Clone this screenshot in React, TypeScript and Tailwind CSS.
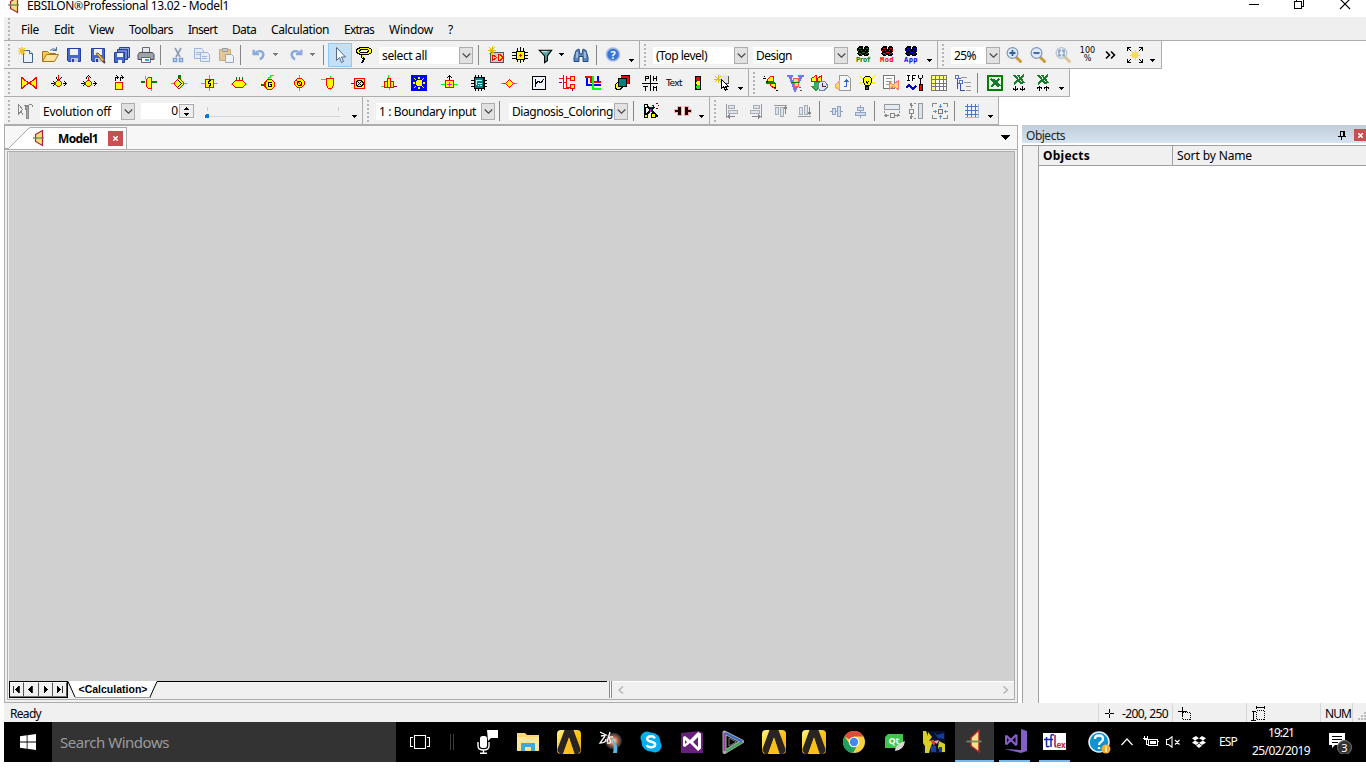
import { useLayoutEffect, useRef, type ReactNode } from "react";

type Shape = [stroke: string, fill: string, d: string, width?: number];

const R = "#f00";
const Y = "#ff0";
const G = "#0f0";
const D = "#008000";
const K = "#000";
const N = "none";

/* Text set to a given width by spreading or tightening its letters. */
function Fit({ w, children, className = "" }: { w: number; children: string; className?: string }) {
  const ref = useRef<HTMLSpanElement>(null);
  useLayoutEffect(() => {
    const el = ref.current;
    if (!el) return;
    el.style.letterSpacing = "0px";
    const natural = el.getBoundingClientRect().width;
    el.style.letterSpacing = `${(w - natural) / children.length}px`;
  }, [w, children]);
  return (
    <span ref={ref} className={`shrink-0 whitespace-pre ${className}`}>
      {children}
    </span>
  );
}

function Ic({ s, smooth = false, className = "size-[18px]", box = 18 }: { s: Shape[]; smooth?: boolean; className?: string; box?: number }) {
  return (
    <svg className={`shrink-0 ${className}`} viewBox={`0 0 ${box} ${box}`} shapeRendering={smooth ? "auto" : "crispEdges"}>
      {s.map(([stroke, fill, d, width], i) => (
        <path key={i} d={d} stroke={stroke} fill={fill} strokeWidth={width ?? 1} />
      ))}
    </svg>
  );
}

function Cell({ children, className = "w-6" }: { children?: ReactNode; className?: string }) {
  return <div className={`flex h-full shrink-0 items-center justify-center ${className}`}>{children}</div>;
}

function Grip() {
  return (
    <div className="flex w-[10px] shrink-0 justify-center">
      <svg className="h-[24px] w-[3px]" viewBox="0 0 3 24" shapeRendering="crispEdges">
        {[1, 5, 9, 13, 17, 21].map((y) => (
          <rect key={y} x="0" y={y} width="2" height="2" fill="#b5b5b5" />
        ))}
      </svg>
    </div>
  );
}

function Sep({ className = "w-[7px]" }: { className?: string }) {
  return (
    <div className={`flex shrink-0 justify-center ${className}`}>
      <div className="h-[20px] w-px bg-[#858585]" />
    </div>
  );
}

function Caret({ className = "w-[15px]", low = false, color = K }: { className?: string; low?: boolean; color?: string }) {
  return (
    <div className={`flex shrink-0 justify-center ${low ? "pt-[11px]" : "pb-px"} ${className}`}>
      <svg className="h-[3px] w-[5px]" viewBox="0 0 5 3" shapeRendering="crispEdges">
        <path d="M0 0h5v1H4v1H3v1H2V2H1V1H0z" fill={color} />
      </svg>
    </div>
  );
}

function Combo({ className, text, w }: { className: string; text: string; w: number }) {
  return (
    <div className={`mt-[5px] flex h-[17px] shrink-0 items-center self-start bg-white ${className}`}>
      <div className="flex min-w-0 flex-1 pt-px pl-[3px]">
        <Fit w={w}>{text}</Fit>
      </div>
      <div className="flex h-[17px] w-[14px] shrink-0 items-center justify-center border border-[#adadad] bg-[#e1e1e1]">
        <svg className="h-[5px] w-[9px]" viewBox="0 0 9 5">
          <path d="M.7.5 4.5 4.2 8.3.5" fill="none" stroke="#444" strokeWidth="1.1" />
        </svg>
      </div>
    </div>
  );
}

function Bar({ className, children }: { className: string; children: ReactNode }) {
  return <div className={`flex h-full shrink-0 items-center border-r border-b border-[#adadad] bg-[#f1f1f1] pt-px ${className}`}>{children}</div>;
}

const ebsilon: Shape[] = [
  ["#b0203a", "#f7e07a", "M5.5 5.5 12.5 1.5V16.5L5.5 12.5z", 1.2],
  ["#5d8a55", N, "M3 9h11", 1.3],
];

const save: Shape[] = [
  ["#243f9c", "#4668cd", "M2.5 2.5h13v13h-12l-1-1z"],
  [N, "#eef2fb", "M5 3h8v6H5z"],
  [N, "#c5c9d4", "M6 12h7v4H6z"],
  [N, "#243f9c", "M7 13h2v3H7z"],
];

const files: Shape[][] = [
  [
    ["#47637f", "#e9f2fb", "M6.5 4.5h6l3 3v9h-9z"],
    ["#47637f", "#fff", "M12.5 4.5v3h3"],
    ["#f2c21c", N, "M5 1v8M1 5h8M2 2l6 6M8 2 2 8", 1.2],
  ],
  [
    ["#a6751a", "#f5c75c", "M1.5 15.5V5.5h5l2 2h6v2"],
    ["#a6751a", "#ffe39b", "M1.5 15.5l4-7h12l-4 7z"],
    ["#4e6f97", N, "M9 4.500q3-3 6-1M15.500 1v3.500h-4"],
  ],
  save,
  [...save, ["#8a5a20", "#f5c148", "M7 7.5 9 7l6.5 7-1.5 2z"], ["#444", N, "M14 15l2 2", 2]],
  [
    ["#243f9c", "#8fa3df", "M6.5 1.5h10v10h-10z"],
    ["#243f9c", "#6e86d2", "M4.5 3.5h10v10h-10z"],
    ["#243f9c", "#4668cd", "M1.5 6.5h10v10h-10z"],
    [N, "#eef2fb", "M4 7h6v4H4zM5 14h4v3H5z"],
  ],
  [
    ["#667", "#e7e9ee", "M5.5 1.5h7v5h-7z"],
    ["#4b4f58", "#9fa3ab", "M2.5 6.5h13l1.500 2v5h-16v-5z"],
    ["#667", "#fff", "M4.5 11.5h9v5h-9z"],
    [N, "#3aa0e0", "M8 13h4v2H8z"],
  ],
];

const clip: Shape[][] = [
  [
    ["#8d9cb5", N, "M6 2l5 9M12 2 7 11", 1.6],
    ["#7da0d5", N, "M4.5 12.5h3v3h-3zM10.5 12.5h3v3h-3z", 1.6],
  ],
  [
    ["#9fb4d6", "#e4ecf8", "M1.5 2.5h7l2 2v8h-9z"],
    ["#9fb4d6", "#e4ecf8", "M7.5 6.5h7l2 2v7h-9z"],
    ["#9fb4d6", N, "M3 6.5h4M3 8.5h4M9 10.5h5M9 12.5h5"],
  ],
  [
    ["#c8ab77", "#e4c795", "M2.5 3.5h11v11h-11z"],
    ["#999", "#ccc", "M5.5 2.5h5v3h-5z"],
    ["#9aa5b8", "#eff3f8", "M8.5 8.5h6l2 2v6h-8z"],
  ],
];

/* Component palette */
const parts: Shape[][] = [
  [[R, Y, "M1.500 3.500v11L8 9.500v-1zM16.500 3.500v11L10 9.500v-1z", 1.3], [R, N, "M8 8.500h2M8 9.500h2"]],
  [
    [K, N, "M1 9.500h3M13 9.500h4M3 7l2 2.500-2 2.500M14 7l2.500 2.500L14 12M6 3.500l2.500 3 3-3"],
    [R, N, "M8.500 1v5M4 9.500h2"],
    [R, Y, "M7.500 6.500h2l2 2v2l-2 2h-2l-2-2v-2z", 1.3],
  ],
  [
    [K, N, "M1 9.500h3M13 9.500h4M3 7l2 2.500-2 2.500M14 7l2.500 2.500L14 12M6 4.500l2.500-3 3 3"],
    [R, N, "M8.500 3v4M4 9.500h2"],
    [R, Y, "M7.500 6.500h2l2 2v2l-2 2h-2l-2-2v-2z", 1.3],
  ],
  [
    [R, Y, "M5.500 8.500h7v7h-7z"],
    [K, N, "M5 3.500h3M10 3.500h3M6.500 1.500l2 2-2 2M11.500 1.500l2 2-2 2M5.500 4v3M10.500 4v3"],
  ],
  [
    [D, N, "M1 8h4M12 8h5", 2],
    [G, N, "M5.500 2v3M11.500 14v3"],
    [R, Y, "M6.500 5.500 8.500 3.500h3v11h-3l-2-2z", 1.3],
  ],
  [
    [G, N, "M1 9.500h16"],
    [D, N, "M9.500 1v4", 3],
    [R, Y, "M8.500 4.500h1l4 4v2l-4 4h-1l-4-4v-2z", 1.4],
    [K, N, "M8 6l3.500 3.500L8 13", 1.3],
  ],
  [
    [G, N, "M1 9.500h16M9.500 1v16"],
    [R, Y, "M5.500 5.500h8v8h-8z"],
    [K, N, "M10.500 6.500h-1v1h-1v2h2v2h-1v1h-1"],
  ],
  [
    [G, N, "M1 10.500h16"],
    [D, N, "M6.500 3v3M9.500 3v3M12.500 3v3"],
    [R, Y, "M5.500 6.500h7l3 3v1l-3 3h-7l-3-3v-1z", 1.3],
  ],
  [
    [D, N, "M1 11h4", 2],
    [G, N, "M8.500 5V3.500h2V1.500H14"],
    [R, Y, "M7.500 5.500h4l3 3v4l-3 3h-4l-2.500-3v-4z", 1.3],
    [K, N, "M12 8.500H8.500v4h3v-2h-2"],
  ],
  [
    [G, N, "M9.500 1v3M9.500 14v3"],
    [R, Y, "M7.500 4.500h4l3 3v3l-3 3h-4l-3-3v-3z", 1.4],
    [K, N, "M7.500 7.500h3l1 1v3h-3l-1-1z"],
    [R, N, "M6 6l7 7", 1.4],
  ],
  [
    [G, N, "M1 5.500h5M10.500 2v3M10.500 14v2"],
    [R, Y, "M6.500 4.500h7v7l-2 3h-3l-2-3z"],
  ],
  [
    ["#800080", N, "M1 9.500h3"],
    [Y, N, "M1 13.500h3"],
    [R, Y, "M4.500 4.500h10v10h-10z"],
    [K, N, "M8 6.500h3l2 2v2l-2 2H8l-2-2v-2zM7.500 7.500l4 4M11.500 7.500l-4 4"],
  ],
  [
    [G, N, "M8.500 1v3M1 12.500h4M9.500 14v2"],
    ["#800080", N, "M13 12.500h4"],
    [R, Y, "M4.500 7.500h3v6h-3zM10.500 7.500h3v6h-3zM7.500 4.500h3v9h-3z"],
  ],
  [
    [N, "#00f", "M1 1h16v16H1z"],
    [Y, N, "M9 3v2M9 13v2M3 9h2M13 9h2M4 4l2 2M12 12l2 2M14 4l-2 2M6 12l-2 2", 1.4],
    [N, Y, "M7 6h4l1 1v4l-1 1H7l-1-1V7z"],
  ],
  [
    [G, N, "M1 10.500h16"],
    [K, N, "M9.500 1v5M7 4l2.500-2.500L12 4"],
    [R, Y, "M5.500 6.500h8v7h-8z"],
    ["#f0f", N, "M9.500 8v5M7 10.500h5"],
  ],
  [
    [K, N, "M5.500 1v16M8.500 1v16M11.500 1v16M1 6.500h16M1 9.500h16M1 12.500h16M14.500 3v13"],
    [K, "#008080", "M4.500 3.500h9v11h-9z"],
    [N, "#bff", "M6 6h6v1H6zM6 6h1v5H6zM8 9h4v1H8zM8 11h1v1H8zM10 11h2v1h-2z"],
  ],
  [
    [G, N, "M1 9.500h3M14 9.500h3"],
    [R, N, "M3 9.500h2M13 9.500h2"],
    [R, Y, "M9.500 5.500 13.500 9.500 9.500 13.500 5.500 9.500z", 1.4],
  ],
];

const partsB: Shape[][] = [
  [
    [K, "#f0f4ff", "M2.500 2.500h13v13h-13z"],
    [K, N, "M5.500 5v7.500M5.500 10.500l2.500-3.500 3 2 3-4"],
  ],
  [
    [R, N, "M1 4.500h4v4h3M5.500 1v4M5.500 8v6h5M8.500 2v12M9 4.500h3M9 13.500h3"],
    [R, Y, "M12.500 2.500h4v4h-4zM12.500 10.500h4v4h-4z"],
    ["#800080", N, "M1 8.500h3M14.500 15v2"],
  ],
  [
    ["#f00", N, "M1 3h6v5h10", 2],
    ["#00f", N, "M3 4v7h14M14 2v6", 2],
    [G, N, "M9 2v13h8", 2],
  ],
  [
    [N, R, "M8 1h9v9H8z"],
    [K, N, "M8 1.500h8.500V10"],
    [K, Y, "M5 8.500h4l2 3-4 4H4l-2-2v-3z"],
    [K, "#008080", "M5.500 4.500h8v8h-8z"],
  ],
  [[K, N, "M1 9.500h16M9.500 1v16M4.500 2v5M4.500 2.500h3v2h-3M12.500 2v5M15.500 2v5M12.500 4.500h3M2 12.500h5M4.500 12.500V17M12.500 17v-5M15.500 17v-5M13 13.500h2"]],
];

const views: Shape[][] = [
  [
    [R, Y, "M5.500 5.500l3-3h3v5h-6zM7.500 9.500h6v5l-4-2z"],
    ["#008000", N, "M4 8.500h9", 2],
    [K, N, "M1 4.500h3M4 7.500h2M12 13.500h2M14 16.500h2M2 2.500h1"],
  ],
  [
    ["#7474ee", N, "M1 2h6M12 2h6M4 3l5 13 6-13", 2.5],
    ["#f55", "#fbd96a", "M7.500 4.500h5v8h-4z"],
    [D, N, "M5 8.500h8"],
    ["#555", N, "M13 13.500h2M14 16.500h2"],
  ],
  [
    [R, Y, "M1.500 4.500 6 1.500v6H1.500zM7.500 4.500l4-3v6h-4z"],
    ["#2d9a45", "#44b35b", "M4 8.500h4v4h2l-4 4-4-4h2z"],
    ["#6581ac", "#dce8f8", "M10.500 7.500h4l2.500 3v3l-3 3h-4l-2-2.500v-4z"],
    ["#333", N, "M12.500 9v3.500h3"],
  ],
  [
    ["#999", "#f5f6f8", "M5.500 1.500h8l3 3v12h-11z"],
    ["#3465d8", N, "M10 12.500h2.500V6M10.500 8l2-2 2 2"],
    ["#f97", "#ffd56b", "M1.500 10.500 5 7.500v8l-3.500-2z"],
  ],
  [
    [Y, N, "M1 2l4 3M17 2l-4 3M1 9h3M14 9h3", 1.4],
    [K, Y, "M7.500 2.500h4l2 2v4l-2 3h-4l-2-3v-4z"],
    [K, "#555", "M7.500 12.500h3v3h-3z"],
    [K, N, "M8 7l1.500 2L11 7"],
  ],
  [
    ["#777", "#fff", "M1.500 1.500h11v13h-11z"],
    ["#999", N, "M4 4.500h6M4 7.500h6M4 10.500h3"],
    ["#f76", "#ffd56b", "M7.500 8.500l3.500 2 5.500-4v9l-5.500-3-3.500 3z"],
  ],
  [
    [N, "#fff", "M0 0h11v8H0z"],
    [K, N, "M2.500 1v5M1 1.500h3M1 6.500h3M6.500 1v6M6 1.500h4M6 4.500h3M12.500 1v3M16.500 1v3M13 4.500h3M14.500 5v5"],
    ["#0000c8", N, "M0 14l3-3 4 4 3-3", 2.2],
    [K, R, "M13.500 10.500h3v6h-3z"],
  ],
  [
    [N, "#fff", "M1 2h16v14H1z"],
    [N, "#ff7", "M1 2h16v3H1zM1 5h4v11H1z"],
    ["#777", N, "M1.500 1.500h15v15h-15zM1 5.500h16M1 9.500h16M1 12.500h16M5.500 1v16M9.500 1v16M13.500 1v16"],
  ],
  [
    ["#3c50ad", N, "M3.500 3v12M3 4.500h4M3 9.500h4M6.500 10v6h4"],
    ["#5674cf", "#fff", "M1.500 1.500h3v3h-3zM5.500 6.500h3v3h-3z"],
    ["#999", N, "M7 3.500h6M10 8.500h7M12 12.500h5M12 16.500h5"],
  ],
];

const excel: Shape[] = [[D, "#eaf5ea", "M2 2h14v14h-14z", 2], ["#187b2c", N, "M5 5l8 8M8 5l6 7M13 5l-8 8", 1.6]];
const arrows = (up: boolean): Shape[] => [
  ["#187b2c", N, "M4 1l8 9M8 1l6 8M14 1 4 10", 2],
  [K, N, up ? "M5.500 17v-5M3 14.500l2.500-2 2.500 2M12.500 17v-5M10 14.500l2.500-2 2.500 2" : "M5.500 12v5M3 14.500l2.500 2 2.500-2M12.500 12v5M10 14.500l2.500 2 2.500-2"],
];

const gray = "#a8adb5";
const pale = "#dbe4ef";
const align: Shape[][] = [
  [["#999", N, "M3.500 2v14"], [gray, pale, "M5.500 3.500h6v3h-6zM5.500 8.500h9v3h-9z"], ["#888", N, "M5 14.500h7M7 12.500l-2 2 2 2"]],
  [["#999", N, "M14.500 2v14"], [gray, pale, "M6.500 3.500h6v3h-6zM3.500 8.500h9v3h-9z"], ["#888", N, "M5 14.500h7M11 12.500l2 2-2 2"]],
  [["#999", N, "M3 3.500h13"], [gray, pale, "M4.500 5.500h3v7h-3zM9.500 5.500h3v9h-3z"], ["#888", N, "M14.500 5v7M13 6.500l1.500-1.500 1.500 1.500"]],
  [["#999", N, "M3 14.500h13"], [gray, pale, "M4.500 5.500h3v7h-3zM9.500 3.500h3v9h-3z"], ["#888", N, "M14.500 5v7M13 10.500l1.500 1.500 1.500-1.500"]],
];
const center: Shape[][] = [
  [["#8c9cb5", N, "M3 9.500h13"], ["#91a3bf", "#cbdcf2", "M5.500 6.500h3v6h-3zM10.500 4.500h3v10h-3z"]],
  [["#8c9cb5", N, "M9.500 3v13"], ["#91a3bf", "#cbdcf2", "M6.500 5.500h6v3h-6zM4.500 10.500h10v3h-10z"]],
];
const space: Shape[][] = [
  [["#999", "#e3ebf5", "M1.500 2.500h15v5h-15z"], ["#888", N, "M1.500 9v2M16.500 9v2M2 13.500h4M12 13.500h4M4 12l-2 1.500L4 15M14 12l2 1.500-2 1.500M7.500 11.500h4v4h-4z"]],
  [["#999", "#d4e3f7", "M11.500 1.500h4v15h-4z"], ["#888", N, "M3 1.500h2M7 1.500h2M3 16.500h2M7 16.500h2M4.500 2v4M4.500 12v4M2.500 7.500h4v4h-4zM3 4l1.500-2L6 4M3 14l1.500 2L6 14"]],
  [["#888", N, "M1.500 5v-3.500h4M12 1.500h4.500V5M1.500 13v3.500h4M12 16.500h4.500V13"], ["#777", "#eee", "M7.500 7.500h4v4h-4z"], ["#5b8fd6", N, "M9.500 2v4M9.500 13v4M2 9.500h4M13 9.500h4M8 4.500h3M8 14.500h3M4.500 8v3M14.500 8v3"]],
];

function Magnifier({ sign, faded = false }: { sign: string; faded?: boolean }) {
  return (
    <svg className={`size-[18px] shrink-0 ${faded ? "opacity-50" : ""}`} viewBox="0 0 18 18">
      <path d="m11 11 4.500 4.500" stroke="#c99a36" strokeWidth="3" strokeLinecap="round" />
      <circle cx="7.500" cy="7" r="5.400" fill="#dbeafb" stroke="#8095ae" strokeWidth="1.200" />
      <path d={sign} stroke="#365f94" strokeWidth="1.800" fill="none" />
    </svg>
  );
}

function Rosette({ color, label }: { color: string; label: string }) {
  return (
    <div className="flex h-[20px] w-[20px] flex-col items-center pt-px">
      <svg className="h-[11px] w-[13px] shrink-0" viewBox="0 0 13 11" shapeRendering="crispEdges">
        <path d="M3 0h2l1 1h1l1-1h2l2 2v3l-1 1 1 2-2 2H8L6 9 4 10H2L0 8l1-2-1-2V2z" fill="#000" />
        <path d="M2 2h2v1H2zM9 2h2v1H9zM4 4h1v1H4zM8 4h1v1H8zM5 6h3v1H5zM2 7h2v1H2zM9 7h2v1H9zM1 4h1v1H1zM11 4h1v1h-1zM4 8h1v1H4zM8 8h1v1H8z" fill={color} />
        <path d="M6 0h1v3H6z" fill="#eee" />
      </svg>
      <span className="flex" style={{ color }}>
        <Fit w={14} className="font-['DejaVu_Sans_Mono',monospace] text-[7px] leading-[7px] font-bold">{label}</Fit>
      </span>
    </div>
  );
}

function Ansys() {
  return (
    <svg className="size-6" viewBox="0 0 24 24">
      <defs>
        <linearGradient id="gold" x1="0" y1="0" x2="1" y2="1">
          <stop offset="0" stopColor="#fff58a" />
          <stop offset=".5" stopColor="#fcc61a" />
          <stop offset="1" stopColor="#f2a900" />
        </linearGradient>
      </defs>
      <rect width="24" height="24" rx="4" fill="url(#gold)" />
      <path d="M7.500 0h9L23.500 19v2l-2.500 3h-3.500L12 7.500 6 24H3L.5 21v-2z" fill="#2b2522" />
      <path d="M12 7.500 17.500 24H6z" fill="#fcc01b" />
    </svg>
  );
}

function Task({ children, className = "w-[41px]" }: { children: ReactNode; className?: string }) {
  return <div className={`flex h-full shrink-0 items-center justify-center ${className}`}>{children}</div>;
}

function TitleBar() {
  return (
    <div className="flex h-[17px] shrink-0 items-start bg-white">
      <Ic s={ebsilon} smooth className="-mt-[4px] ml-px size-[18px]" />
      <div className="-mt-px ml-[4px] flex leading-[14px]">
        <Fit w={47}>EBSILON</Fit>
        <span className="w-[9px] text-[11px]">®</span>
        <Fit w={146}>Professional 13.02 - Model1</Fit>
      </div>
      <div className="ml-auto flex gap-[35px] pr-[15px]">
        <svg className="h-[12px] w-[10px]" viewBox="0 0 10 12" shapeRendering="crispEdges"><path d="M0 4.500h10" stroke="#000" /></svg>
        <svg className="h-[12px] w-[10px]" viewBox="0 0 10 12" shapeRendering="crispEdges"><path d="M.5 1.500h7v7h-7zM2.500 1V-.5h7v7H8" stroke="#000" fill="none" /></svg>
        <svg className="h-[12px] w-[12px]" viewBox="0 0 12 12"><path d="m1-1 10 10M11-1 1 9" stroke="#000" strokeWidth="1.100" /></svg>
      </div>
    </div>
  );
}

const menus: [string, number][] = [["File", 18], ["Edit", 20], ["View", 25], ["Toolbars", 44], ["Insert", 29], ["Data", 24], ["Calculation", 58], ["Extras", 30], ["Window", 44], ["?", 5]];

function MenuBar() {
  return (
    <div className="flex h-[24px] shrink-0 items-center border-b border-[#adadad] bg-[#efefef]">
      <Grip />
      <div className="ml-[7px] flex gap-[15px] pt-[2px]">
        {menus.map(([label, w]) => (
          <Fit key={label} w={w}>{label}</Fit>
        ))}
      </div>
    </div>
  );
}

function RowOne() {
  return (
    <div className="flex h-[28px] shrink-0">
      <Bar className="w-[636px]">
        <Grip />
        {files.map((s, i) => <Cell key={i}><Ic s={s} smooth /></Cell>)}
        <Sep className="ml-[-1px] w-[7px]" />
        <Cell className="ml-[2px] w-[24px]"><Ic s={clip[0]} smooth /></Cell>
        {clip.slice(1).map((s, i) => <Cell key={i}><Ic s={s} smooth /></Cell>)}
        <Sep className="ml-[-1px] w-[7px]" />
        <Cell className="ml-[3px] w-6"><Ic s={[["#8aa9dc", N, "M3 3v5h6M4 8c3-5 9-4 10 0 0 3-2 5-4 6", 2.6]]} smooth className="size-4" /></Cell>
        <Caret className="w-[9px]" color="#777" />
        <Cell className="ml-[4px] w-6"><Ic s={[["#8aa9dc", N, "M15 3v5H9M14 8C11 3 5 4 4 8c0 3 2 5 4 6", 2.6]]} smooth className="size-4" /></Cell>
        <Caret className="w-[9px]" color="#777" />
        <Sep className="ml-[2px] w-[9px]" />
        <div className="flex h-[24px] w-[24px] shrink-0 items-center justify-center border border-[#90c8f6] bg-[#c4e0f5]">
          <Ic s={[["#536987", "#f6f9fd", "M5.500 1.500v13l3-3 2 5 2-1-2-4.500h4z"]]} smooth />
        </div>
        <Cell><Ic s={[[K, Y, "M5.500 1.500h8l3 2v3l-3 2h-8l-4-2v-3z"], [K, "#f1f1f1", "M5.500 3.500h7l1 1-1 2h-7l-1-1z"], [K, N, "M7 8v3l2 2-2 4", 2], [Y, N, "M7.500 9v3"]]} /></Cell>
        <Combo className="ml-[3px] w-[94px]" text="select all" w={45} />
        <Sep className="ml-[2px] w-[7px]" />
        <Cell className="ml-[2px] w-[24px]"><Ic s={[["#555", "#ccc", "M3.500 6.500h13v10h-13z"], [R, Y, "M5.500 8.500 9.500 11.500l-4 3zM11 8.500h2l2 2v2l-2 2h-2z"], ["#d5c400", N, "M5 0v9M1 4.500h8M2 1l6 7M8 1 2 8"]]} /></Cell>
        <Cell className="w-[24px]"><Ic s={[[K, N, "M6.500 2v14M9.500 1v16M12.500 2v14M1 6.500h16M1 9.500h16M1 12.500h16"], [K, Y, "M5.500 5.500h8v8h-8z"], [R, N, "M9.500 8v3M8 9.500h3"]]} /></Cell>
        <Cell className="w-[26px]"><Ic s={[[K, "#58a6a0", "M2.500 3.500h13L11 9.500v5l-3 2v-7z", 1.2], ["#def", N, "M5 5h6"]]} smooth className="size-[17px]" /></Cell>
        <Caret className="w-[7px]" />
        <Cell className="ml-[4px] w-6"><Ic s={[["#24497c", "#5c87bf", "M4 4.500 7 3l1 5h2l1-5 3 1.500 2 7v4h-5v-5H7v5H2v-4z"], ["#dceafa", N, "M5 6v6M13 6v6"]]} smooth /></Cell>
        <Sep className="w-[7px]" />
        <Cell className="ml-px w-[24px]"><svg className="size-4" viewBox="0 0 16 16"><circle cx="8" cy="7.500" r="6.500" fill="#3974d7" stroke="#a5bbdf" strokeWidth="1.500" /><text x="8" y="11.500" fontSize="11" fontWeight="bold" textAnchor="middle" fill="#fff">?</text></svg></Cell>
        <Caret className="w-[13px]" low />
      </Bar>
      <Bar className="w-[298px]">
        <Grip />
        <Combo className="ml-[3px] w-[95px]" text="(Top level)" w={51} />
        <Combo className="ml-[5px] w-[95px]" text="Design" w={36} />
        <Cell className="ml-[3px] w-6"><Rosette color="#008000" label="Prof" /></Cell>
        <Cell><Rosette color="#f00" label="Mod" /></Cell>
        <Cell><Rosette color="#00f" label="App" /></Cell>
        <Caret low className="w-[13px]" />
      </Bar>
      <Bar className="w-[224px]">
        <Grip />
        <Combo className="ml-[3px] w-[49px]" text="25%" w={22} />
        <Cell className="ml-[2px] w-6"><Magnifier sign="M4.500 7h6M7.500 4v6" /></Cell>
        <Cell><Magnifier sign="M4.500 7h6" /></Cell>
        <Cell className="w-[26px]"><Magnifier faded sign="M5 7V4.500h2M8 4.500h2V7M5 7.500v2h2M8 9.500h2v-2" /></Cell>
        <Cell className="w-[23px]"><div className="flex flex-col items-center pb-px font-['DejaVu_Sans',sans-serif] text-[8px] leading-[8px]"><span>100</span><span>%</span></div></Cell>
        <Cell><Ic s={[[K, N, "m4 5.500 3.500 3.500-3.500 3.500M9 5.500l3.500 3.500L9 12.500", 1.6]]} smooth /></Cell>
        <Cell><Ic s={[[K, N, "M1.500 5V1.500H5M13 1.500h3.500V5M1.500 13v3.500H5M13 16.500h3.500V13M2 2l3 3M16 2l-3 3M2 16l3-3M16 16l-3-3"], ["#f3d55e", N, "M9 4v10M4 9h10M5.500 5.500l7 7M12.500 5.500l-7 7"], [N, "#fad95b", "M6 6h6v6H6z"]]} /></Cell>
        <Caret low className="w-[11px]" />
      </Bar>
    </div>
  );
}

function RowTwo() {
  return (
    <div className="flex h-[28px] shrink-0">
      <Bar className="w-[745px]">
        <Grip />
        {parts.map((s, i) => <Cell key={i} className="w-[30px]"><Ic s={s} /></Cell>)}
        <Cell className="w-[30px]"><Ic s={partsB[0]} /></Cell>
        <Cell className="w-[26px]"><Ic s={partsB[1]} /></Cell>
        <Cell className="w-[26px]"><Ic s={partsB[2]} /></Cell>
        <Cell className="w-[32px]"><Ic s={partsB[3]} /></Cell>
        <Cell className="w-[24px]"><Ic s={partsB[4]} /></Cell>
        <Cell className="w-[24px]"><Fit w={16} className="font-['DejaVu_Sans',sans-serif] text-[9px]">Text</Fit></Cell>
        <Cell><Ic s={[[K, "#333", "M6.500 2.500h5v13h-5z"], [N, R, "M8 3h2l1 1v2l-1 1H8L7 6V4z"], [N, Y, "M8 7h2l1 1v2l-1 1H8l-1-1V8z"], [N, G, "M8 11h2l1 1v2l-1 1H8l-1-1v-2z"]]} /></Cell>
        <Cell><Ic s={[["#555", N, "M10 9.500h5.500v-8"], [N, "#e4e4e4", "M7 1h8v8H7z"], ["#d5c400", N, "M5.500 1v8M1 5.500h8M2 2l6 6M8 2 2 8"], [K, "#fff", "M8.500 5.500v9l2-2 2 4 1.500-1-1.500-3h3z"]]} /></Cell>
        <Caret low className="w-[13px]" />
      </Bar>
      <Bar className="w-[321px]">
        <Grip />
        {views.map((s, i) => <Cell key={i}><Ic s={s} /></Cell>)}
        <Sep className="mr-[3px] w-[5px]" />
        <Cell><Ic s={excel} /></Cell>
        <Cell><Ic s={arrows(false)} /></Cell>
        <Cell><Ic s={arrows(true)} /></Cell>
        <Caret low className="w-[13px]" />
      </Bar>
    </div>
  );
}

function RowThree() {
  return (
    <div className="flex h-[28px] shrink-0">
      <Bar className="w-[359px]">
        <Grip />
        <Cell className="w-[22px]"><Ic s={[["#888", N, "M2.500 2v10l3-3 1 4M3 3l4 5M8 3.500h5M9.500 3v5M13 2.500h3M16.500 3v2"], ["#888", "#aaa", "M9.500 4.500h3v12h-2v-9z"]]} /></Cell>
        <Combo className="ml-[4px] w-[95px]" text="Evolution off" w={68} />
        <div className="ml-[6px] flex h-[16px] w-[53px] shrink-0 items-center justify-end bg-white">
          <span className="pr-px">0</span>
          <div className="flex h-[14px] w-[15px] flex-col items-center justify-center gap-[3px] border border-[#aaa] bg-[#eee]">
            <svg className="h-[3px] w-[5px]" viewBox="0 0 5 3" shapeRendering="crispEdges"><path d="M2 0h1v1h1v1h1v1H0V2h1V1h1z" /></svg>
            <svg className="h-[3px] w-[5px]" viewBox="0 0 5 3" shapeRendering="crispEdges"><path d="M0 0h5v1H4v1H3v1H2V2H1V1H0z" /></svg>
          </div>
        </div>
        <svg className="ml-[8px] h-[18px] w-[138px] shrink-0" viewBox="0 0 138 18" shapeRendering="crispEdges">
          <path d="M5.500 5v4M136.500 5v4" stroke="#ccc" />
          <path d="M5 14.500h133" stroke="#d5d5d5" />
          <path d="M4 12h2l1 1v3H3v-3z" fill="#0078d7" />
        </svg>
        <Caret low className="ml-[7px] w-[15px]" />
      </Bar>
      <Bar className="w-[347px]">
        <Grip />
        <Combo className="ml-[3px] w-[119px]" text="1 : Boundary input" w={97} />
        <Sep className="ml-[2px] w-[5px]" />
        <Combo className="ml-[7px] w-[119px]" text="Diagnosis_Coloring" w={101} />
        <Sep className="ml-[3px] w-[5px]" />
        <Cell className="ml-[3px] w-[24px]"><Ic s={[[K, N, "M3 5v8M5 4l11 11M12 5 3 14", 1.6], [K, "#dfd", "M2.500 2.500h3v3h-3z"], [K, Y, "M2.500 12.500h3v3h-3zM9.500 11.500h4v4h-4z"], ["#800000", N, "M10 3.500h2M14 1.500h2M14 6.500h2M8 5.500h2M16 3.500h1"], ["#f0f", N, "M8.500 7v3"]]} /></Cell>
        <Cell className="ml-[5px] w-[30px]"><Ic s={[["#f5b0b0", "#200", "M.5 7.500h3v-3h4v9h-4v-3h-3zM17.500 7.500h-3v-3h-4v9h4v-3h3z"]]} /></Cell>
        <Caret low className="w-[7px]" />
      </Bar>
      <Bar className="w-[289px]">
        <Grip />
        {align.map((s, i) => <Cell key={i}><Ic s={s} /></Cell>)}
        <Sep className="mr-px w-[7px]" />
        {center.map((s, i) => <Cell key={i}><Ic s={s} /></Cell>)}
        <Sep className="mr-[3px] w-[5px]" />
        {space.map((s, i) => <Cell key={i}><Ic s={s} /></Cell>)}
        <Sep className="mr-[3px] w-[5px]" />
        <Cell><Ic s={[["#4877bd", N, "M4.500 2v14M8.500 2v14M12.500 2v14M2 4.500h14M2 8.500h14M2 12.500h14"], ["#9dbae5", N, "M15.500 2v14M2 15.500h14"]]} /></Cell>
        <Caret low className="w-[13px]" />
      </Bar>
    </div>
  );
}

const nav = ["M3.500 4v7M9 4v7L5 7.500z", "M8 4v7L4 7.500z", "M5 4v7l4-3.500z", "M9.500 4v7M4 4v7l4-3.500z"];

function ModelFrame() {
  return (
    <div className="flex w-[1014px] shrink-0 flex-col border border-[#adadad] bg-[#f0f0f0]">
      <div className="flex h-[23px] shrink-0 items-start justify-between bg-[#f7f7f7]">
        <div className="flex h-full">
          <svg className="h-[23px] w-[26px]" viewBox="0 0 26 23">
            <path d="M3 23 23 3q2-1.500 3-1.500V23z" fill="#fff" />
            <path d="M0 22.500h3.500L23 3q1.500-1.500 3-1.500" fill="none" stroke="#a6a6a6" />
          </svg>
          <div className="mt-px flex h-[22px] w-[96px] items-center border-t border-r border-[#adadad] bg-white">
            <Ic s={ebsilon} smooth className="-mt-[2px] -ml-px size-[18px]" />
            <Fit w={40} className="ml-[10px] font-bold">Model1</Fit>
            <div className="ml-[10px] flex size-[15px] items-center justify-center bg-[#c75050]">
              <svg className="size-[5px]" viewBox="0 0 5 5"><path d="m0 0 5 5M5 0 0 5" stroke="#fff" strokeWidth="1.500" /></svg>
            </div>
          </div>
        </div>
        <svg className="mt-[9px] mr-[7px] h-[5px] w-[9px]" viewBox="0 0 9 5" shapeRendering="crispEdges"><path d="M0 0h9L4.500 5z" /></svg>
      </div>
      <div className="h-px shrink-0 bg-[#adadad]" />
      <div className="mx-[2px] mt-px mb-[2px] flex min-h-0 flex-1 flex-col border border-[#adadad] bg-[#f0f0f0]">
        <div className="ml-px flex-1 bg-[#d0d0d0]" />
        <div className="ml-px flex h-[18px] shrink-0">
          <div className="flex h-[17px] w-[59px] shrink-0 border border-black bg-[#888]">
            {nav.map((d) => (
              <div key={d} className="flex min-w-0 flex-1 items-center justify-center border-t border-r border-b border-t-white border-r-[#555] border-b-[#777] bg-[#f0f0f0]">
                <svg className="h-[15px] w-[13px] shrink-0" viewBox="0 0 13 15" shapeRendering="crispEdges"><path d={d} stroke="#000" fill="#000" strokeWidth=".8" /></svg>
              </div>
            ))}
          </div>
          <div className="relative flex w-[88px] shrink-0 items-center justify-center">
            <svg className="absolute inset-0 h-[18px] w-[90px]" viewBox="0 0 90 18"><path d="M0 0 7 16h75L89 0z" fill="#fff" /><path d="M7 16.500h76" stroke="#999" /><path d="M0 .5 7 16M82 16 89 .5" stroke="#000" fill="none" /></svg>
            <Fit w={69} className="relative ml-[2px] pb-[2px] font-['Liberation_Sans',sans-serif] text-[10.5px] font-bold">{"<Calculation>"}</Fit>
          </div>
          <div className="ml-px w-[450px] shrink-0 border-t border-black" />
          <div className="mr-px ml-[2px] h-[17px] w-[3px] border-x border-[#888] bg-white" />
          <div className="flex flex-1 items-center justify-between border-t border-white px-[5px] pb-[2px]">
            <svg className="h-[8px] w-[6px]" viewBox="0 0 6 8"><path d="M5 .5 1 4l4 3.500" stroke="#b5b5b5" strokeWidth="1.500" fill="none" /></svg>
            <svg className="h-[8px] w-[6px]" viewBox="0 0 6 8"><path d="m.5.5 4 3.500-4 3.500" stroke="#b5b5b5" strokeWidth="1.500" fill="none" /></svg>
          </div>
        </div>
      </div>
    </div>
  );
}

function ObjectsPanel() {
  return (
    <div className="ml-[4px] flex min-w-0 flex-1 flex-col">
      <div className="flex h-[18px] shrink-0 items-center justify-between bg-linear-to-b from-[#bfcddb] to-[#d6e3f0] pl-[4px]">
        <Fit w={39} className="pt-[3px] text-[#222]">Objects</Fit>
        <div className="flex items-center gap-[8px] pt-[2px]">
          <svg className="h-[9px] w-[8px]" viewBox="0 0 8 9" shapeRendering="crispEdges"><path d="M2.500 0v5.500M2 .5h4M0 5.500h8M3.500 6v3" stroke="#000" fill="none" /><path d="M5 0h2v5H5z" /></svg>
          <div className="flex size-[12px] items-center justify-center bg-[#c75050]"><svg className="size-[5px]" viewBox="0 0 5 5"><path d="m0 0 5 5M5 0 0 5" stroke="#fff" strokeWidth="1.500" /></svg></div>
        </div>
      </div>
      <div className="mt-[2px] flex min-h-0 flex-1 border-t border-l border-[#a0a0a0]">
        <div className="w-[15px] shrink-0 bg-[#f0f0f0]" />
        <div className="flex flex-1 flex-col border-l border-[#a0a0a0] bg-white">
          <div className="flex h-[20px] items-center border-b border-[#a0a0a0] bg-[#f0f0f0]">
            <div className="flex h-full w-[134px] items-center border-r border-[#a0a0a0] pl-[4px]"><Fit w={47} className="font-bold">Objects</Fit></div>
            <Fit w={75} className="ml-[4px]">Sort by Name</Fit>
          </div>
        </div>
      </div>
    </div>
  );
}

function StatusBar() {
  return (
    <div className="flex h-[19px] shrink-0 items-center bg-[#f0f0f0] pl-[6px]">
      <Fit w={31} className="pt-[3px]">Ready</Fit>
      <div className="ml-auto flex h-full items-center">
        <div className="flex h-full w-[74px] items-center border-l border-[#d7d7d7] pt-[2px] pl-[6px]">
          <svg className="size-[9px]" viewBox="0 0 9 9" shapeRendering="crispEdges"><path d="M4.500 0v4M4.500 5v4M0 4.500h4M5 4.500h4" stroke="#000" /></svg>
          <Fit w={46} className="ml-[8px] pt-px">-200, 250</Fit>
        </div>
        <div className="flex h-full w-[74px] items-center border-l border-[#d7d7d7] pt-[3px] pl-[5px]">
          <svg className="h-[14px] w-[14px]" viewBox="0 0 14 14" shapeRendering="crispEdges"><path d="M4.500 0v9M0 4.500h9" stroke="#000" /><path d="M4.500 5.500h8v7h-8z" stroke="#000" strokeDasharray="1 1" fill="none" /></svg>
        </div>
        <div className="flex h-full w-[74px] items-center border-l border-[#d7d7d7] pt-[3px] pl-[4px]">
          <svg className="h-[16px] w-[15px]" viewBox="0 0 15 16" shapeRendering="crispEdges"><path d="M2.500 5v10M0 14.500h5M1 5.500h4M5 1.500h9M5.500 0v3M13.500 0v3" stroke="#000" /><path d="M5.500 4.500h8v9h-8z" stroke="#000" strokeDasharray="1 1" fill="none" /></svg>
        </div>
        <div className="flex h-full w-[32px] items-center border-l border-[#d7d7d7] pt-[3px] pl-[4px]"><Fit w={26}>NUM</Fit></div>
        <div className="flex h-full w-[14px] items-end justify-end border-l border-[#d7d7d7] pb-[2px]"><svg className="size-[8px]" viewBox="0 0 8 8" shapeRendering="crispEdges"><path d="M6 0h2v2H6zM3 3h2v2H3zM6 3h2v2H6zM0 6h2v2H0zM3 6h2v2H3zM6 6h2v2H6z" fill="#bbb" /></svg></div>
      </div>
    </div>
  );
}

function TaskBar() {
  return (
    <div className="flex h-[40px] shrink-0 items-center bg-black text-white">
      <Cell className="w-[48px]"><svg className="size-4" viewBox="0 0 16 16"><path d="M0 2.300 6.700 1.300v6.200H0zM7.500 1.200 16 0v7.500H7.500zM0 8.500h6.700v6.200L0 13.700zM7.500 8.500H16V16l-8.500-1.200z" fill="#fff" /></svg></Cell>
      <div className="flex h-full w-[344px] shrink-0 items-center bg-[#333] pl-[8px] text-[15px] text-[#9b9b9b]"><Fit w={109}>Search Windows</Fit></div>
      <Cell className="w-[48px]"><svg className="h-[14px] w-[20px]" viewBox="0 0 20 14"><path d="M4.500.5h11v13h-11zM3 2.500H.5v9H3M17 2.500h2.500v9H17" stroke="#fff" fill="none" strokeWidth="1.100" /></svg></Cell>
      <div className="ml-[6px] h-[16px] w-[4px] border-x border-[#3c3c3c]" />
      <div className="ml-[12px] flex h-full shrink-0">
        <Task><svg className="size-6" viewBox="0 0 24 24" fill="none"><path d="M12 0h11v8h-7l-3 3z" fill="#fff" /><rect x="5" y="6" width="7" height="12" rx="2.500" fill="#fff" /><path d="M3 12v4q0 4 5.500 4t5.500-4v-4M8.500 20v4M5 23.200h7" stroke="#fff" strokeWidth="1.400" /></svg></Task>
        <Task><svg className="size-6" viewBox="0 0 24 24"><path d="M1 3h8l2 2h12v16H1z" fill="#f6d773" /><path d="M1 7h22v13H1z" fill="#ffe699" /><path d="M5 13h14v8h-4v-4H9v4H5z" fill="#3aa9e0" /></svg></Task>
        <Task><Ansys /></Task>
        <Task><svg className="size-6" viewBox="0 0 24 24"><defs><radialGradient id="ball"><stop offset="0" stopColor="#fff1cf" /><stop offset=".5" stopColor="#b56449" /><stop offset="1" stopColor="#17242e" /></radialGradient></defs><circle cx="15.500" cy="11" r="8.500" fill="url(#ball)" /><path d="M13 8q4 6 2 15h4q2-9-6-15" fill="#58b9e5" /><path d="M2 2l6 3-5 1M7 6l-5 7q6 0 6-4M12 2l-3 10M15 7q-5-1-3 3t-3 3" stroke="#fff" strokeWidth="1.300" fill="none" /></svg></Task>
        <Task><svg className="size-6" viewBox="0 0 24 24"><circle cx="8" cy="8" r="6.500" fill="#00aff0" /><circle cx="16" cy="16" r="6.500" fill="#00aff0" /><circle cx="12" cy="12" r="9.500" fill="#00aff0" /><path d="M16 8.200Q14.500 6.200 12 6.300 8.300 6.500 8.200 9c0 3.500 8 2 8 5.500 0 3-6.200 4-8.600.7" fill="none" stroke="#fff" strokeWidth="2.400" /></svg></Task>
        <Task><svg className="size-6" viewBox="0 0 24 24"><path d="M1 3l18-2 4 2v20H1z" fill="#68217a" /><path d="M3 7l2-1 5 4 8-8 3 1.500v15L18 21l-8-8-5 4-2-1zM5 10v4l2-2zM18 7l-5 5 5 5z" fill="#fff" fillRule="evenodd" /></svg></Task>
        <Task><svg className="size-6" viewBox="0 0 24 24" fill="none" strokeLinejoin="round"><path d="M3.500 22V2.500L21 11.500z" stroke="#a9a9ad" strokeWidth="4" /><path d="M3.500 21V3" stroke="#8d4a92" strokeWidth="2" /><path d="M5 21l16-9" stroke="#40a453" strokeWidth="2.200" /><path d="M4 3l17 8.500" stroke="#376aca" strokeWidth="2.200" /><path d="M8 16V8l7.500 4z" fill="#000" stroke="#777" /></svg></Task>
        <Task><Ansys /></Task>
        <Task className="w-[40px]"><Ansys /></Task>
        <Task className="w-[40px]"><svg className="size-[22px]" viewBox="0 0 24 24"><circle cx="12" cy="12" r="12" fill="#fdcf43" /><path d="M1.600 6A12 12 0 0 1 22.400 6H12v6z" fill="#dc4b3e" /><path d="M1.600 6A12 12 0 0 0 11 24l5-9-8 0z" fill="#1aa15f" /><circle cx="12" cy="12" r="5.800" fill="#fff" /><circle cx="12" cy="12" r="4.600" fill="#4688f1" /></svg></Task>
        <Task className="w-[41px]"><svg className="size-5" viewBox="0 0 20 20"><path d="M3 2h15v12l-3 2H0V5z" fill="#3fc74b" /><text x="9" y="12" fontSize="9" fontWeight="bold" textAnchor="middle" fill="#fff">Qt</text><path d="M10 19q0-7 10-10-1 9-10 10" fill="#d8d8d8" /></svg></Task>
        <Task className="mr-[2px] w-[38px]"><svg className="size-[22px]" viewBox="0 0 22 22"><path d="M0 0h22v22H0z" fill="#07102e" /><path d="M0 0h3l2 5V1l4 5-3 4 5-1-3 6-2 7H2V15L0 12zM16 10l6 3v8h-5l-2-5z" fill="#d9cf23" /><path d="M10 1l4 3 7-2v6l-6-1z" fill="#153c98" /><path d="M7 9l6 2-2 4z" fill="#e33842" /><path d="M11 10l5-1-2 4z" fill="#f5a2a7" /><path d="M8 15h5v6H8zM16 16h3v5h-3z" fill="#1b3fa0" /></svg></Task>
        <Task className="w-[39px] border-b-2 border-[#76b9ed] bg-[#333]"><svg className="size-6" viewBox="0 0 24 24"><path d="M8 8.500 16 1v22L8 17z" fill="#f9df87" stroke="#b3202f" strokeWidth="1.400" /><path d="M3.500 12.500h15" stroke="#708d62" strokeWidth="1.800" /></svg></Task>
        <Task className="ml-[5px] w-[31px] border-b-2 border-[#76b9ed]"><svg className="size-6" viewBox="0 0 24 24"><path d="M18 0l6 2v20l-6 2-17-4 17 1z" fill="#865fc5" /><path d="M2 6.500 4 6l4 3.500L12.500 5l2 1v10l-2 1L8 12.500 4 16l-2-.5zM4 9v4.500L6 11zM12.500 8l-3 3 3 3z" fill="#865fc5" fillRule="evenodd" /></svg></Task>
        <Task className="ml-[9px] w-[31px] border-b-2 border-[#76b9ed]"><svg className="h-[17px] w-[23px]" viewBox="0 0 23 17"><path d="M0 0h23v17H0z" fill="#fff" /><path d="M3.500 4v8q0 3 3 1M1 6.500h9M8 14V3q0-2 3-1" stroke="#1a20be" fill="none" strokeWidth="1.500" /><path d="M12 2v10q0 2 1.500 2" stroke="#b31542" fill="none" strokeWidth="1.500" /><text x="18" y="15" fontSize="8" fontWeight="bold" textAnchor="middle" fill="#d1242a">ex</text></svg></Task>
      </div>
      <div className="ml-[18px] flex h-full shrink-0 items-center">
        <svg className="size-[23px]" viewBox="0 0 23 23"><circle cx="11" cy="11" r="10" fill="#0d93d1" stroke="#eef" strokeWidth="1.500" /><path d="M7 8q0-3.500 4-3.500T15 8q0 2-2 3t-2 3M11 16v2" stroke="#fff" strokeWidth="2.300" fill="none" /><circle cx="18" cy="18" r="4.500" fill="#f2af23" /><path d="M18 15v1.500M18 17v4" stroke="#fff" strokeWidth="1.300" /></svg>
        <svg className="ml-[10px] h-[8px] w-[12px]" viewBox="0 0 12 8"><path d="m.5 7 5.500-6 5.500 6" stroke="#fff" fill="none" strokeWidth="1.200" /></svg>
        <svg className="ml-[10px] h-[12px] w-[16px]" viewBox="0 0 16 12" shapeRendering="crispEdges"><path d="M5.500 3.500h9v6h-9zM1.500 0v3h3V0M0 2.500h5M3.500 3v5h2M15 5.500h1v2" stroke="#fff" fill="none" /><path d="M7 5h6v3H7z" fill="#fff" /></svg>
        <svg className="ml-[7px] h-[12px] w-[15px]" viewBox="0 0 15 12"><path d="M.5 3.500h2L6 .8v10.400L2.500 8.500h-2zM9 4l4.500 4.500M13.500 4 9 8.500" stroke="#fff" fill="none" strokeWidth="1.100" /></svg>
        <svg className="ml-[11px] h-[12px] w-[14px]" viewBox="0 0 14 12"><path d="M0 2.300 4 0l3 2.200L3 4.500zM7 2.200 10 0l4 2.300-3 2.200zM0 6.700l3-2.200L7 6.700 4 9zM7 6.700l4-2.200 3 2.200L10 9zM4 9.800l3-2.200 3 2.200L7 12z" fill="#fff" /></svg>
        <Fit w={18} className="ml-[13px]">ESP</Fit>
        <div className="ml-[14px] flex w-[60px] flex-col items-center leading-[18px]"><Fit w={26}>19:21</Fit><Fit w={58}>25/02/2019</Fit></div>
        <div className="ml-[17px] size-[24px]">
          <svg className="size-6" viewBox="0 0 24 24"><path d="M1 3h16v12H7l-3 3v-3H1z" fill="#fff" /><path d="M4 6.500h10M4 9.500h10M4 12.500h6" stroke="#000" /><circle cx="16.500" cy="17.500" r="7" fill="#333" stroke="#777" /><text x="16.500" y="21.500" fontSize="11" textAnchor="middle" fill="#fff">3</text></svg>
        </div>
      </div>
    </div>
  );
}

export default function App() {
  return (
    <div className="flex h-[768px] w-[1366px] flex-col overflow-hidden bg-white pb-[6px] pl-[4px] font-['Noto_Sans','Open_Sans',sans-serif] text-[12px] leading-[16px] text-black">
      <TitleBar />
      <MenuBar />
      <RowOne />
      <RowTwo />
      <RowThree />
      <div className="flex min-h-0 flex-1">
        <ModelFrame />
        <ObjectsPanel />
      </div>
      <StatusBar />
      <TaskBar />
    </div>
  );
}
